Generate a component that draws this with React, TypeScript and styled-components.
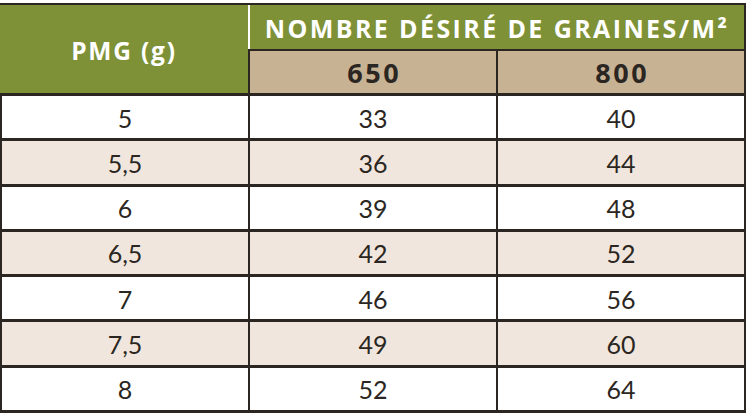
import React from "react";
import styled, { createGlobalStyle } from "styled-components";

const DARK = "#2b2621";
const GREEN = "#7e9136";
const TAN = "#c8b294";
const ALT = "#f1e6dd";

const Global = createGlobalStyle`
  html, body { margin: 0; padding: 0; background: #ffffff; }
  body { width: 747px; height: 418px; overflow: hidden; }
`;

const Page = styled.div`
  width: 747px;
  padding-top: 3px;
  box-sizing: border-box;
`;

const Table = styled.div`
  width: 746px;
  display: flex;
  flex-direction: column;
`;

const Header = styled.div`
  display: grid;
  grid-template-columns: 248px 1fr;
  height: 93px;
  box-sizing: border-box;
  background: ${GREEN};
  border-top: 2px solid ${DARK};
  border-bottom: 3px solid ${DARK};
  border-right: 2px solid ${DARK};
`;

const HeadLabel = styled.div`
  display: flex;
  align-items: center;
  justify-content: center;
  color: #ffffff;
  font-family: "Open Sans", "Liberation Sans", sans-serif;
  font-weight: 700;
  font-size: 24.5px;
  letter-spacing: 1.8px;
  padding-top: 2px;
`;

const HeadGroup = styled.div`
  display: grid;
  grid-template-rows: 44px 1fr;
`;

const GroupTitle = styled.div`
  display: flex;
  align-items: center;
  justify-content: center;
  border-left: 2px solid #ffffff;
  color: #ffffff;
  font-family: "Open Sans", "Liberation Sans", sans-serif;
  font-weight: 700;
  font-size: 25px;
  letter-spacing: 2.4px;
  white-space: nowrap;
  padding-top: 1px;
`;

const SubRow = styled.div`
  display: grid;
  grid-template-columns: 248px 1fr;
  background: ${TAN};
  border-top: 2px solid ${DARK};
  border-left: 2px solid ${DARK};
`;

const SubCell = styled.div<{ $divider?: boolean }>`
  display: flex;
  align-items: center;
  justify-content: center;
  color: ${DARK};
  font-family: "Open Sans", "Liberation Sans", sans-serif;
  font-weight: 700;
  font-size: 27px;
  letter-spacing: 2.5px;
  text-indent: 2.5px;
  padding-top: 1px;
  border-right: ${(p) => (p.$divider ? `2px solid ${DARK}` : "none")};
`;

const Body = styled.div`
  display: grid;
  grid-template-rows: repeat(7, 45.29px);
`;

const Row = styled.div<{ $alt: boolean }>`
  display: grid;
  grid-template-columns: repeat(3, 248px);
  box-sizing: border-box;
  background: ${(p) => (p.$alt ? ALT : "#ffffff")};
  border-left: 2px solid ${DARK};
  border-bottom: 3px solid ${DARK};
`;

const Cell = styled.div`
  display: flex;
  align-items: center;
  justify-content: center;
  border-right: 2px solid ${DARK};
  color: ${DARK};
  font-family: "Lato", "Liberation Sans", sans-serif;
  font-weight: 400;
  font-size: 25px;
  padding-top: 1px;
`;

const rows: [string, string, string][] = [
  ["5", "33", "40"],
  ["5,5", "36", "44"],
  ["6", "39", "48"],
  ["6,5", "42", "52"],
  ["7", "46", "56"],
  ["7,5", "49", "60"],
  ["8", "52", "64"],
];

export default function App() {
  return (
    <Page>
      <Global />
      <Table>
        <Header>
          <HeadLabel>PMG (g)</HeadLabel>
          <HeadGroup>
            <GroupTitle>NOMBRE DÉSIRÉ DE GRAINES/M²</GroupTitle>
            <SubRow>
              <SubCell $divider>650</SubCell>
              <SubCell>800</SubCell>
            </SubRow>
          </HeadGroup>
        </Header>
        <Body>
          {rows.map((r, i) => (
            <Row key={i} $alt={i % 2 === 1}>
              {r.map((v, j) => (
                <Cell key={j}>{v}</Cell>
              ))}
            </Row>
          ))}
        </Body>
      </Table>
    </Page>
  );
}
